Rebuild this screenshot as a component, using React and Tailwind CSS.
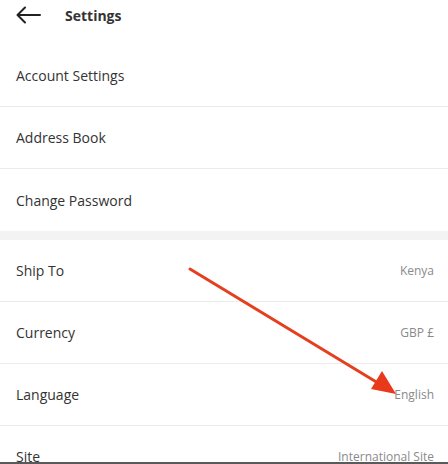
import React from 'react';

const Row = ({ label, value, border = true }) => (
  <div className={`flex items-center justify-between h-[62px] pl-4 pr-[14px] bg-white ${border ? 'border-b border-[#ececec]' : ''}`}>
    <span className="text-[14px] text-[#333]">{label}</span>
    {value && <span className="text-[12px] text-[#8a8a8a]">{value}</span>}
  </div>
);

export default function App() {
  return (
    <div className="w-[448px] h-[464px] bg-white flex flex-col" style={{ fontFamily: '"Open Sans", "Noto Sans", sans-serif' }}>
      <div className="relative h-[462px] overflow-hidden">
        <div className="flex items-start h-[45px] pt-[6px] pl-4 gap-6">
          <svg width="25" height="18" viewBox="0 0 25 18" fill="none" stroke="#222" strokeWidth="2" strokeLinecap="round" strokeLinejoin="round">
            <path d="M24 9H2M9 1.5L1.5 9L9 16.5" />
          </svg>
          <span className="text-[14px] leading-[20px] font-bold text-[#333]">Settings</span>
        </div>
        <Row label="Account Settings" />
        <Row label="Address Book" />
        <Row label="Change Password" border={false} />
        <div className="h-[9px] bg-[#f3f3f3]" />
        <Row label="Ship To" value="Kenya" />
        <Row label="Currency" value="GBP £" />
        <Row label="Language" value="English" />
        <Row label="Site" value="International Site" />
        <svg className="absolute left-0 top-0 pointer-events-none" width="448" height="462" viewBox="0 0 448 462">
          <line x1="190" y1="269" x2="378" y2="383" stroke="#e4401f" strokeWidth="3" strokeLinecap="round" />
          <polygon points="396,394 371,389 382,371" fill="#e8391a" />
        </svg>
      </div>
      <div className="h-[2px] bg-[#5a5a5a]" />
    </div>
  );
}
